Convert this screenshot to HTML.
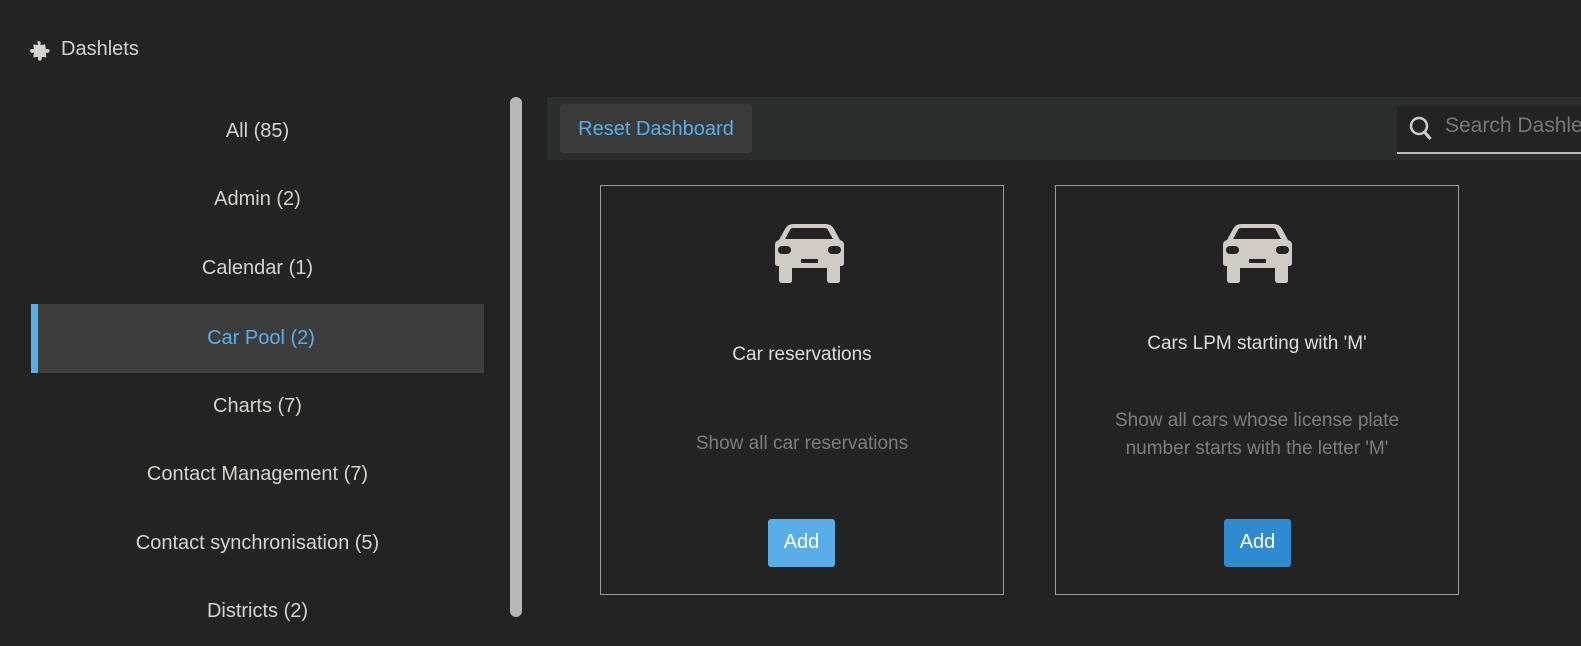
<!DOCTYPE html><html><head><style>
body{margin:0;width:1581px;height:611px;background:#232323;font-family:"Liberation Sans",sans-serif;overflow:hidden;position:relative;color:#d6d3ce}
.a{position:absolute}
.it{position:absolute;left:31px;width:453px;height:69px;line-height:69px;text-align:center;font-size:20px;color:#d6d3ce}
.card{position:absolute;top:185px;width:404px;height:410px;border:1px solid #9a9a9a;box-sizing:border-box}
.t{position:absolute;left:0;right:0;text-align:center;font-size:19px;color:#ddd}
.d{position:absolute;left:0;right:0;text-align:center;font-size:19px;color:#7d7d7d;line-height:28px}
.btn{position:absolute;width:67px;height:48px;border-radius:3px;color:#fff;font-size:20px;line-height:46px;text-align:center}
</style></head><body>
<svg class="a" style="left:29px;top:39px" width="26" height="26" viewBox="0 0 24 24"><path fill="#d6d3ce" d="M9 2c2 0 2 2 1.5 3.5L15 5l.5 4.5c1.5-.5 3.5-.5 3.5 1.5s-2 2-3.5 1.5L16 17l-4.5-.5c.5 1.5.5 3.5-1.5 3.5s-2-2-1.5-3.5L4 17l.5-4.5C3 13 1 13 1 11s2-2 3.5-1.5L4 5l4.5.5C8 4 7 2 9 2z"/></svg>
<div class="a" style="left:61px;top:38px;font-size:20px">Dashlets</div>
<div class="it" style="top:97px">All (85)</div>
<div class="it" style="top:165px">Admin (2)</div>
<div class="it" style="top:234px">Calendar (1)</div>
<div class="it" style="top:304px;background:#3d3d3d;color:#5aaee8;border-left:7px solid #5aaee8;box-sizing:border-box">Car Pool (2)</div>
<div class="it" style="top:372px">Charts (7)</div>
<div class="it" style="top:440px">Contact Management (7)</div>
<div class="it" style="top:509px">Contact synchronisation (5)</div>
<div class="it" style="top:577px">Districts (2)</div>
<div class="a" style="left:510px;top:97px;width:12px;height:520px;background:#b8b8b8;border-radius:6px"></div>
<div class="a" style="left:547px;top:97px;width:1034px;height:63px;background:#2b2c2c"></div>
<div class="a" style="left:560px;top:104px;width:192px;height:49px;background:#3a3a3a;border-radius:3px;color:#5aaee8;font-size:20px;line-height:50px;text-align:center">Reset Dashboard</div>
<div class="a" style="left:1397px;top:106px;width:184px;height:46px;background:#232323;border-bottom:2px solid #bbb"></div>
<svg class="a" style="left:1409px;top:115px" width="26" height="28" viewBox="0 0 26 28"><circle cx="10" cy="11" r="8" fill="none" stroke="#ccc" stroke-width="2.5"/><path d="M15.5 17l6 7" stroke="#ccc" stroke-width="3"/></svg>
<div class="a" style="left:1445px;top:114px;font-size:21px;color:#777;white-space:nowrap">Search Dashlets</div>
<svg width="0" height="0" style="position:absolute"><defs><g id="car"><path fill="#d0ccc5" d="M17 0h34q5 0 8 5l6 11q4 1 4 5v18q0 3-3 3h-1v14q0 3-3 3h-7q-3 0-3-3v-12h-35v12q0 3-3 3h-7q-3 0-3-3v-14h-1q-3 0-3-3v-18q0-4 4-5l6-11q3-5 8-5z"/><path fill="#232323" d="M10 15l5-9q1-2 3-2h32q2 0 3 2l5 9z"/><rect x="3" y="22" width="13" height="8" rx="4" fill="#232323"/><rect x="53" y="22" width="13" height="8" rx="4" fill="#232323"/><rect x="26" y="35" width="17" height="4" fill="#232323"/></g></defs></svg>
<div class="card" style="left:600px">
<svg class="a" style="left:174px;top:38px" width="70" height="60"><use href="#car"/></svg>
<div class="t" style="top:158px">Car reservations</div>
<div class="d" style="top:244px">Show all car reservations</div>
<div class="btn" style="left:167px;top:333px;background:#5aaee8">Add</div>
</div>
<div class="card" style="left:1055px">
<svg class="a" style="left:167px;top:38px" width="70" height="60"><use href="#car"/></svg>
<div class="t" style="top:147px">Cars LPM starting with 'M'</div>
<div class="d" style="top:221px">Show all cars whose license plate<br>number starts with the letter 'M'</div>
<div class="btn" style="left:168px;top:333px;background:#2f8ad0">Add</div>
</div>
</body></html>
